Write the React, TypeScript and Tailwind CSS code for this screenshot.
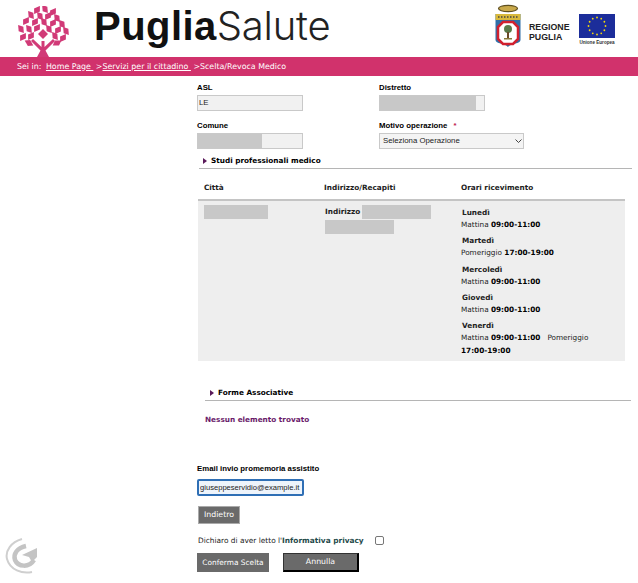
const verdana = "font-['DejaVu_Sans',sans-serif]";

const slots = [
  { day: "Lunedì", text: "Mattina", time: "09:00-11:00" },
  { day: "Martedì", text: "Pomeriggio", time: "17:00-19:00" },
  { day: "Mercoledì", text: "Mattina", time: "09:00-11:00" },
  { day: "Giovedì", text: "Mattina", time: "09:00-11:00" },
];

const TreeLogo = () => {
  const leaves = [
    [20, 4, 35], [28, 3, -35], [36, 6, 35], [14, 9, -35], [23, 10, -35], [31, 10, 35], [40, 12, -35],
    [9, 15, 35], [18, 16, 35], [27, 16, -35], [36, 17, 35], [45, 18, -35],
    [4, 23, -35], [12, 23, -35], [20, 22, 35], [32, 23, -35], [41, 24, 35], [49, 25, -35],
    [6, 31, 35], [14, 30, 35], [38, 30, -35], [46, 32, 35], [12, 37, -60], [40, 37, 60],
  ];
  return (
    <svg width="52" height="51" viewBox="0 0 52 51" className="ml-[17px] mt-[6px] shrink-0">
      {leaves.map(([x, y, r], i) => (
        <path key={i} d="M0 -5 L3.2 -0.5 L0 5 L-3.2 0.5Z" fill="#d13a77" transform={`translate(${x} ${y}) rotate(${r})`} />
      ))}
      <path d="M26 23 L31 28 L26 33 L21 28Z" fill="#d13a77" />
      <path d="M24.5 35 H27.5 V41 L36 33 L38 35 L28.5 44.5 L32 51 H20 L23.5 44.5 L14 35 L16 33 L24.5 41Z" fill="#d13a77" />
    </svg>
  );
};

const Stemma = () => (
  <svg width="26" height="44" viewBox="0 0 26 44" className="shrink-0">
    <ellipse cx="13" cy="4.5" rx="9.5" ry="3.2" fill="#c9a94a" stroke="#5e4f20" strokeWidth="1.2" />
    <path d="M0.5 10 H25.5 V36 C25.5 40 16 39 13 43 C10 39 0.5 40 0.5 36Z" fill="#2f6fa8" />
    <rect x="0.5" y="10" width="25" height="6" fill="#d9b93c" />
    <path d="M3 13 H23" stroke="#444" strokeWidth="1.5" strokeDasharray="1.5 1.5" />
    <path d="M8 18 H18 L23 23 V35 L18 40 H8 L3 35 V23Z" fill="#fff" stroke="#d1202f" strokeWidth="2.5" />
    <circle cx="13" cy="25" r="4" fill="#5a7a4a" />
    <rect x="12" y="28" width="2" height="6" fill="#6b4a2a" />
    <rect x="9" y="34" width="8" height="1.5" fill="#8a7a3a" />
  </svg>
);

const EuFlag = () => {
  const stars = Array.from({ length: 12 }, (_, i) => {
    const a = (i * Math.PI) / 6;
    return <circle key={i} cx={18 + Math.cos(a) * 8.5} cy={12 + Math.sin(a) * 8.5} r="0.9" fill="#f5d90a" />;
  });
  return (
    <svg width="36" height="24" viewBox="0 0 36 24">
      <rect width="36" height="24" fill="#1c2d9a" />
      {stars}
    </svg>
  );
};

const Field = ({ label, value, redacted }: { label: string; value?: string; redacted?: number }) => (
  <div className="flex flex-col">
    <span className="h-[11px] text-[7.8px] leading-[11px] font-bold text-black">{label}</span>
    <div className="mt-[2px] flex h-[16px] w-[106px] items-center border border-[#c9c9c9] bg-[#f1f1f1] text-[7.8px] text-[#222]">
      {redacted ? <div className="h-full bg-[#c8c8c8]" style={{ width: redacted }} /> : <span className="pl-[1px]">{value}</span>}
    </div>
  </div>
);

const SectionTitle = ({ title, className, innerClass }: { title: string; className: string; innerClass: string }) => (
  <div className={`h-[14px] border-b border-[#b5b5b5] ${className}`}>
    <div className={`mt-[1px] flex items-center gap-[4px] ${verdana} text-[7.3px] leading-[11px] font-bold text-black ${innerClass}`}>
      <svg width="4" height="6" viewBox="0 0 4 6"><path d="M0 0 L4 3 L0 6Z" fill="#5a1a5a" /></svg>
      {title}
    </div>
  </div>
);

const Redacted = ({ w }: { w: number }) => <div className="h-[14px] bg-[#c8c8c8]" style={{ width: w }} />;

const GreyButton = ({ label, className }: { label: string; className: string }) => (
  <button className={`${verdana} whitespace-nowrap bg-[#6a6a6a] text-white ${className}`}>{label}</button>
);

const App = () => {
  return (
    <div className="relative h-[583px] w-[638px] overflow-hidden bg-white font-['Liberation_Sans',Arial,sans-serif]">
      <header className="flex h-[57px] items-start">
        <TreeLogo />
        <span className="ml-[25px] mt-[3px] text-[40px] leading-[46px] tracking-[0.45px] text-[#111]">
          <b>Puglia</b><span className="font-['Inter',sans-serif] font-light tracking-[-0.2px] text-[#222]">Salute</span>
        </span>
        <div className="ml-auto mr-[23px] mt-[4px] flex items-start">
          <Stemma />
          <div className="ml-[8px] mt-[18px] w-[40px] text-[8.8px] leading-[10px] font-bold whitespace-nowrap text-[#222]">REGIONE<br />PUGLIA</div>
          <div className="ml-[10px] mt-[10px] flex w-[36px] flex-col items-center">
            <EuFlag />
            <span className="mt-[2px] text-[4.6px] leading-[6px] font-bold whitespace-nowrap text-[#333]">Unione Europea</span>
          </div>
        </div>
      </header>

      <nav className={`flex h-[19px] items-center bg-[#d1326c] pl-[17px] ${verdana} text-[7.9px] whitespace-pre text-white`}>
        Sei in: <a className="ml-[2px] underline">Home Page </a> &gt;<a className="underline">Servizi per il cittadino </a> &gt;Scelta/Revoca Medico
      </nav>

      <main className="ml-[197px] w-[435px] pt-[6px]">
        <div className="grid grid-cols-[182px_1fr] gap-y-[9px]">
          <Field label="ASL" value="LE" />
          <Field label="Distretto" redacted={96} />
          <Field label="Comune" redacted={64} />
          <div className="flex flex-col">
            <span className="h-[11px] text-[7.8px] leading-[11px] font-bold text-black">Motivo operazione<span className="ml-[6px] text-[#c02050]">*</span></span>
            <div className="relative mt-[2px] h-[16px] w-[145px]">
              <select className="block h-full w-full appearance-none border border-[#c9c9c9] bg-[#f4f4f4] pl-[3px] text-[7.8px] text-[#222]">
                <option>Seleziona Operazione</option>
              </select>
              <svg width="7" height="5" viewBox="0 0 7 5" className="pointer-events-none absolute right-[2px] top-[6px]">
                <path d="M0.5 0.5 L3.5 3.5 L6.5 0.5" fill="none" stroke="#444" strokeWidth="1" />
              </svg>
            </div>
          </div>
        </div>

        <div className="mt-[6px]"><SectionTitle title="Studi professionali medico" className="ml-[2px]" innerClass="pl-[4px]" /></div>

        <div className={`${verdana} ml-[1px] w-[427px] text-[7.3px] text-[#222]`}>
          <div className="grid h-[32px] grid-cols-[120px_137px_1fr] items-center border-b-2 border-[#c4c4c4] pl-[6px] pt-[9px] font-bold">
            <span>Città</span><span>Indirizzo/Recapiti</span><span>Orari ricevimento</span>
          </div>
          <div className="grid h-[160px] grid-cols-[121px_136px_1fr] bg-[#eeeeee] pl-[6px] pt-[4px]">
            <Redacted w={64} />
            <div>
              <div className="flex items-center gap-[2px] font-bold"><span>Indirizzo</span><Redacted w={69} /></div>
              <div className="mt-[1px]"><Redacted w={69} /></div>
            </div>
            <div className="mt-[1px] leading-[13px]">
              {slots.map((s) => (
                <div key={s.day} className="mb-[3.25px]">
                  <div className="h-[12px] pl-[1px] font-bold">{s.day}</div>
                  <div>{s.text} <b className="text-black">{s.time}</b></div>
                </div>
              ))}
              <div className="h-[12px] pl-[1px] font-bold">Venerdì</div>
              <div className="w-[140px]">Mattina <b className="text-black">09:00-11:00</b>&nbsp;&nbsp; Pomeriggio <b className="text-black">17:00-19:00</b></div>
            </div>
          </div>
        </div>

        <div className="mt-[26px]"><SectionTitle title="Forme Associative" className="ml-[8px] mr-[1px]" innerClass="pl-[5px]" /></div>

        <p className={`${verdana} ml-[8px] mt-[13px] text-[7.3px] leading-[11px] font-bold text-[#6a1b6a]`}>Nessun elemento trovato</p>

        <label className="mt-[38px] block text-[7.8px] leading-[11px] font-bold text-black">Email invio promemoria assistito</label>
        <input
          readOnly
          value="giuseppeservidio@example.it"
          className="mt-[5px] block h-[17px] w-[107px] rounded-[2px] border-2 border-[#2f6fb5] bg-[#eef4fb] pl-[1px] text-[7.6px] text-[#222] outline-none"
        />

        <GreyButton label="Indietro" className="ml-[1px] mt-[10px] block h-[18px] w-[42px] border border-[#aaa] text-[7.8px]" />

        <div className={`${verdana} mt-[11px] flex h-[11px] items-center text-[7.4px] text-[#222]`}>
          <span className="ml-[1px]">Dichiaro di aver letto l'<b className="text-[#1f4a4a]">Informativa privacy</b></span>
          <span className="ml-[11px] h-[9px] w-[9px] rounded-[2px] border border-[#777] bg-white" />
        </div>

        <div className="mt-[7px] flex">
          <GreyButton label="Conferma Scelta" className="h-[19px] w-[72px] text-[7.4px]" />
          <GreyButton label="Annulla" className="ml-[14px] h-[19px] w-[76px] border border-b-2 border-r-2 border-[#333] border-b-black border-r-black text-[7.8px]" />
        </div>
      </main>

      <svg width="34" height="38" viewBox="0 0 34 38" className="absolute left-[5px] top-[537px]">
        <path d="M17 2 C6 5 0 14 2 22 C5 33 17 37 27 35" fill="none" stroke="#cfcfcf" strokeWidth="2" />
        <path d="M21 9 C12 11 8 17 10 23 C13 30 24 31 29 23" fill="none" stroke="#c4c4c4" strokeWidth="4.5" />
        <path d="M32 11 L17 18 L24 20 L27 25 L32 20Z" fill="#c4c4c4" />
      </svg>
    </div>
  );
};

export default App;
